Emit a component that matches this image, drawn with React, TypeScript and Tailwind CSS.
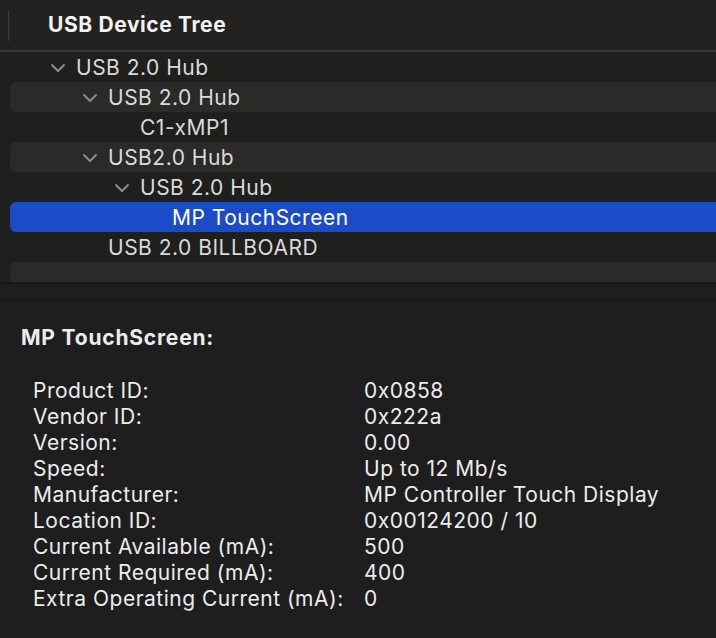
const font = { fontFamily: "Inter, 'Liberation Sans', sans-serif" };

type Node = { label: string; level: number; open?: boolean; selected?: boolean };

const tree: Node[] = [
  { label: "USB 2.0 Hub", level: 0, open: true },
  { label: "USB 2.0 Hub", level: 1, open: true },
  { label: "C1-xMP1", level: 2 },
  { label: "USB2.0 Hub", level: 1, open: true },
  { label: "USB 2.0 Hub", level: 2, open: true },
  { label: "MP TouchScreen", level: 3, selected: true },
  { label: "USB 2.0 BILLBOARD", level: 1 },
];

const indent = ["pl-[40px]", "pl-[72px]", "pl-[104px]", "pl-[136px]"];

const info = [
  ["Product ID:", "0x0858"],
  ["Vendor ID:", "0x222a"],
  ["Version:", "0.00"],
  ["Speed:", "Up to 12 Mb/s"],
  ["Manufacturer:", "MP Controller Touch Display"],
  ["Location ID:", "0x00124200 / 10"],
  ["Current Available (mA):", "500"],
  ["Current Required (mA):", "400"],
  ["Extra Operating Current (mA):", "0"],
];

function Chevron() {
  return (
    <svg width="16" height="10" viewBox="0 0 16 10" fill="none">
      <path d="M2 2 L8 8 L14 2" stroke="#8c8c8c" strokeWidth="2" strokeLinecap="round" strokeLinejoin="round" />
    </svg>
  );
}

export default function App() {
  return (
    <div className="w-[716px] h-[638px] overflow-hidden bg-[#1e1e1e]" style={font}>
      <div className="h-[50px] flex items-center bg-[#222221]">
        <div className="ml-[8px] w-px h-[31px] bg-[#3c3c3c]" />
        <h1 className="ml-[39px] text-[21px] tracking-[0.6px] font-bold text-[#f2f2f2]">USB Device Tree</h1>
      </div>
      <div className="h-[2px] bg-[#3a3a39]" />

      <div className="bg-[#1f1f1e]">
        {tree.map((n, i) => (
          <div
            key={i}
            className={
              "ml-[10px] h-[30px] flex items-center rounded-l-[6px] pt-px " +
              indent[n.level] +
              (n.selected ? " bg-[#1c4bc8]" : i % 2 === 1 ? " bg-[#2a2a29]" : "")
            }
          >
            <div className="w-[26px] flex items-center">{n.open && <Chevron />}</div>
            <span
              className={
                "text-[21px] tracking-[0.5px] " + (n.selected ? "text-white" : "text-[#dadada]")
              }
            >
              {n.label}
            </span>
          </div>
        ))}
        <div className="ml-[10px] h-[20px] rounded-tl-[6px] bg-[#2a2a29]" />
      </div>
      <div className="h-[2px] bg-[#181818]" />
      <div className="h-[15px] bg-[#1e1e1e]" />
      <div className="h-px bg-[#171717]" />

      <div className="pt-[26px] pl-[21px] text-[#ececec]">
        <h2 className="text-[21px] tracking-[0.8px] font-bold leading-[24px]">MP TouchScreen:</h2>
        <div className="mt-[28px] pl-[12px] grid grid-cols-[331px_1fr] text-[21px] tracking-[0.5px] leading-[26px]">
          {info.map(([k, v]) => (
            <div key={k} className="contents">
              <span>{k}</span>
              <span>{v}</span>
            </div>
          ))}
        </div>
      </div>
    </div>
  );
}
